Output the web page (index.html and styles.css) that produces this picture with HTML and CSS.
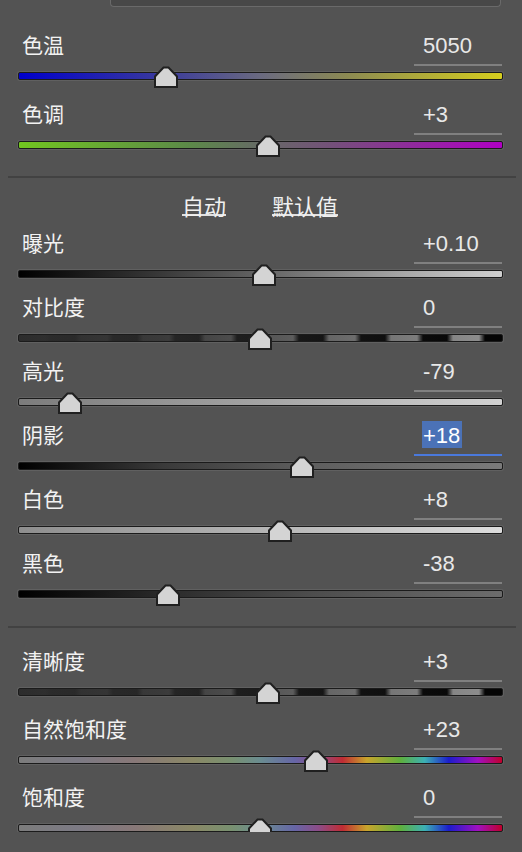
FILE: index.html
```html
<!DOCTYPE html>
<html lang="zh-CN">
<head>
    <meta charset="UTF-8">
    <meta name="viewport" content="width=device-width, initial-scale=1.0">
    <title>基本</title>
    <link rel="stylesheet" href="styles.css">
</head>
<body>
    <div class="preset-box"></div>

    <!-- white balance -->
    <div class="group wb">
        <div class="row">
            <div class="head"><span class="label">色温</span><span class="field"><span class="value">5050</span></span></div>
            <div class="track temp"><span class="thumb" style="left: 30.43%"><svg width="24" height="22" viewBox="0 0 24 22"><path d="M1 21V10.5L9.5 1.5H14.5L23 10.5V21Z"/></svg></span></div>
        </div>
        <div class="row">
            <div class="head"><span class="label">色调</span><span class="field"><span class="value">+3</span></span></div>
            <div class="track tint"><span class="thumb" style="left: 51.55%"><svg width="24" height="22" viewBox="0 0 24 22"><path d="M1 21V10.5L9.5 1.5H14.5L23 10.5V21Z"/></svg></span></div>
        </div>
    </div>

    <div class="sep"></div>

    <div class="tools">
        <a class="link">自动</a>
        <a class="link">默认值</a>
    </div>

    <!-- tone -->
    <div class="group">
        <div class="row">
            <div class="head"><span class="label">曝光</span><span class="field"><span class="value">+0.10</span></span></div>
            <div class="track expo"><span class="thumb" style="left: 50.72%"><svg width="24" height="22" viewBox="0 0 24 22"><path d="M1 21V10.5L9.5 1.5H14.5L23 10.5V21Z"/></svg></span></div>
        </div>
        <div class="row">
            <div class="head"><span class="label">对比度</span><span class="field"><span class="value">0</span></span></div>
            <div class="track stripes"><span class="thumb" style="left: 49.90%"><svg width="24" height="22" viewBox="0 0 24 22"><path d="M1 21V10.5L9.5 1.5H14.5L23 10.5V21Z"/></svg></span></div>
        </div>
        <div class="row">
            <div class="head"><span class="label">高光</span><span class="field"><span class="value">-79</span></span></div>
            <div class="track light"><span class="thumb" style="left: 10.56%"><svg width="24" height="22" viewBox="0 0 24 22"><path d="M1 21V10.5L9.5 1.5H14.5L23 10.5V21Z"/></svg></span></div>
        </div>
        <div class="row">
            <div class="head"><span class="label">阴影</span><span class="field active"><span class="value"><span class="selected">+18</span></span></span></div>
            <div class="track shadow"><span class="thumb" style="left: 58.59%"><svg width="24" height="22" viewBox="0 0 24 22"><path d="M1 21V10.5L9.5 1.5H14.5L23 10.5V21Z"/></svg></span></div>
        </div>
        <div class="row">
            <div class="head"><span class="label">白色</span><span class="field"><span class="value">+8</span></span></div>
            <div class="track white"><span class="thumb" style="left: 54.04%"><svg width="24" height="22" viewBox="0 0 24 22"><path d="M1 21V10.5L9.5 1.5H14.5L23 10.5V21Z"/></svg></span></div>
        </div>
        <div class="row">
            <div class="head"><span class="label">黑色</span><span class="field"><span class="value">-38</span></span></div>
            <div class="track black"><span class="thumb" style="left: 30.85%"><svg width="24" height="22" viewBox="0 0 24 22"><path d="M1 21V10.5L9.5 1.5H14.5L23 10.5V21Z"/></svg></span></div>
        </div>
    </div>

    <div class="sep second"></div>

    <!-- presence -->
    <div class="group presence">
        <div class="row">
            <div class="head"><span class="label">清晰度</span><span class="field"><span class="value">+3</span></span></div>
            <div class="track stripes"><span class="thumb" style="left: 51.55%"><svg width="24" height="22" viewBox="0 0 24 22"><path d="M1 21V10.5L9.5 1.5H14.5L23 10.5V21Z"/></svg></span></div>
        </div>
        <div class="row">
            <div class="head"><span class="label">自然饱和度</span><span class="field"><span class="value">+23</span></span></div>
            <div class="track sat"><span class="thumb" style="left: 61.49%"><svg width="24" height="22" viewBox="0 0 24 22"><path d="M1 21V10.5L9.5 1.5H14.5L23 10.5V21Z"/></svg></span></div>
        </div>
        <div class="row">
            <div class="head"><span class="label">饱和度</span><span class="field"><span class="value">0</span></span></div>
            <div class="track sat"><span class="thumb" style="left: 49.90%"><svg width="24" height="22" viewBox="0 0 24 22"><path d="M1 21V10.5L9.5 1.5H14.5L23 10.5V21Z"/></svg></span></div>
        </div>
    </div>
</body>
</html>
```

FILE: styles.css
```css
html, body {
    margin: 0;
    overflow: hidden;
}
body {
    background-color: #535353;
    color: #eeeeee;
    font-family: "Noto Sans CJK SC", sans-serif;
}
.preset-box {
    height: 6px;
    margin: 0 21px 0 110px;
    background-color: #484848;
    border: 1px solid #6a6a6a;
    border-top: none;
    border-radius: 0 0 4px 4px;
}
.group {
    display: flex;
    flex-direction: column;
    gap: 17px;
}
.group.wb {
    margin-top: 26px;
    gap: 22px;
}
.group.presence {
    margin-top: 21px;
    gap: 21px;
}
.head {
    display: flex;
    justify-content: space-between;
    align-items: flex-start;
    height: 33px;
    padding-left: 22px;
    padding-right: 20px;
}
.label {
    font-size: 21px;
    line-height: 23px;
    color: #f2f2f2;
}
.field {
    box-sizing: border-box;
    width: 88px;
    height: 33px;
    padding-left: 9px;
    border-bottom: 2px solid #808080;
}
.field.active {
    border-bottom-color: #4a79dc;
}
.value {
    display: block;
    font-family: "Liberation Sans", Arial, sans-serif;
    font-size: 22px;
    line-height: 26px;
    color: #e8e8e8;
}
.selected {
    background-color: #4b72b7;
    color: #ffffff;
    padding: 2px 2px 0 1px;
    margin-left: -1px;
}
.track {
    position: relative;
    height: 6px;
    margin: 6px 19px 0 18px;
    border: 1px solid #1b1b1b;
    border-radius: 2px;
    box-shadow: 0 0 0 1px #606060;
}
.thumb {
    position: absolute;
    top: -7px;
    width: 24px;
    height: 22px;
    margin-left: -12px;
}
.thumb svg {
    display: block;
}
.thumb path {
    fill: #d4d4d4;
    stroke: #202020;
    stroke-width: 2;
}

/* track colours */
.temp {
    background: linear-gradient(to right, #0000cc, #3b3b9c 30%, #6a6a80 50%, #8c8a52 68%, #d6ce1e);
}
.tint {
    background: linear-gradient(to right, #72c620, #5c8a48 35%, #666a66 50%, #74507a 65%, #b000c4);
}
.expo {
    background: linear-gradient(to right, #000000, #3a3a3a 30%, #6e6e6e 55%, #a8a8a8 80%, #cfcfcf);
}
.stripes {
    background:
        linear-gradient(to right, #2c2c2c, rgba(44, 44, 44, 0.85) 30%, rgba(44, 44, 44, 0.45) 60%, rgba(44, 44, 44, 0) 95%),
        repeating-linear-gradient(to right, #8c8c8c 0, #8c8c8c 26px, #050505 32px, #050505 56px, #8c8c8c 62px);
}
.light {
    background: linear-gradient(to right, #7c7c7c, #a4a4a4 50%, #d2d2d2);
}
.shadow {
    background: linear-gradient(to right, #000000, #3a3a3a 30%, #5e5e5e 60%, #7a7a7a);
}
.white {
    background: linear-gradient(to right, #8e8e8e, #b4b4b4 50%, #dcdcdc);
}
.black {
    background: linear-gradient(to right, #000000, #2a2a2a 30%, #4c4c4c 60%, #6c6c6c);
}
.sat {
    background: linear-gradient(to right, #7c7c7c 0%, #7c7a84 12%, #887878 24%, #8a8866 36%, #789070 44%, #6a8c90 50%, #6666a6 57%, #8c4c88 62%, #c02c34 67%, #c8a42c 72%, #5eb03e 79%, #3cb0b4 84%, #1c1ccc 89%, #a010c0 95%, #c0002c 100%);
}

.sep {
    height: 2px;
    margin: 27px 6px 0 8px;
    background-color: #424242;
}
.sep.second {
    margin-top: 28px;
}
.tools {
    box-sizing: border-box;
    height: 53px;
    padding-top: 16px;
    display: flex;
    align-items: flex-start;
    justify-content: center;
    gap: 46px;
    padding-right: 2px;
}
.link {
    display: block;
    height: 20px;
    font-size: 22px;
    line-height: 22px;
    color: #f0f0f0;
    border-bottom: 2px solid #e0e0e0;
}
```
